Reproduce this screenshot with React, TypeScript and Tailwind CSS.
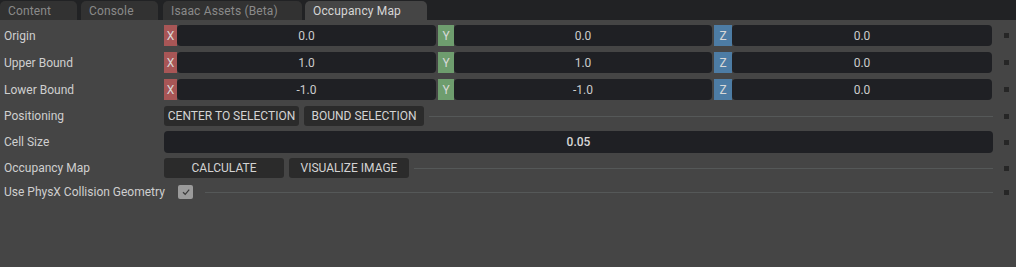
const font = { fontFamily: "Roboto, 'Liberation Sans', sans-serif" }

const tabs = [
  { label: "Content", w: "w-[77px]" },
  { label: "Console", w: "w-[77px]" },
  { label: "Isaac Assets (Beta)", w: "w-[139px]" },
  { label: "Occupancy Map", w: "w-[122px]" },
]

function Tab({ label, w, active }: { label: string; w: string; active?: boolean }) {
  return (
    <div
      className={
        `${w} h-[19px] pl-2 flex items-center rounded-t-[5px] text-[12px] tracking-[0.15px] ` +
        (active ? "bg-[#454545] text-[#d6d6d6]" : "bg-[#323232] text-[#8a8a8a]")
      }
    >
      {label}
    </div>
  )
}

function Axis({ axis, value, color, labelW }: { axis: string; value: string; color: string; labelW: string }) {
  return (
    <div className="flex h-full min-w-0">
      <div className={`${color} ${labelW} h-full flex items-center justify-center text-[12px] text-[#d8d8d8]`}>
        {axis}
      </div>
      <div className="flex-1 h-full rounded-[4px] bg-[#1f2024] flex items-center justify-center text-[12px] text-[#cccccc]">
        {value}
      </div>
    </div>
  )
}

function Row({ label, className, children }: { label: string; className: string; children: React.ReactNode }) {
  return (
    <div className={`flex items-center ${className}`}>
      <div className="w-[164px] pl-1 text-[12px] text-[#cfcfcf] whitespace-nowrap">{label}</div>
      <div className="flex-1 h-full flex items-center">{children}</div>
      <div className="ml-[11px] mr-[7px] w-[5px] h-[5px] bg-[#262626]" />
    </div>
  )
}

function Vec({ x, y, z }: { x: string; y: string; z: string }) {
  return (
    <div className="grid grid-cols-[272px_274px_278px] gap-x-[2px] w-full h-full">
      <Axis axis="X" value={x} color="bg-[#a85656]" labelW="w-[13px]" />
      <Axis axis="Y" value={y} color="bg-[#6e9d6e]" labelW="w-[16px]" />
      <Axis axis="Z" value={z} color="bg-[#4d7ca4]" labelW="w-[18px]" />
    </div>
  )
}

function Btn({ label, w }: { label: string; w: string }) {
  return (
    <div className={`${w} h-full rounded-[3px] bg-[#2b2b2b] flex items-center justify-center text-[12px] text-[#d4d4d4] whitespace-nowrap`}>
      {label}
    </div>
  )
}

function Line() {
  return <div className="flex-1 h-px bg-[#555858]" />
}

export default function App() {
  return (
    <div className="w-[1016px] h-[267px] bg-[#454545] flex flex-col" style={font}>
      <div className="h-[20px] bg-[#212224] flex items-end">
        {tabs.map((t, i) => (
          <div key={t.label} className={i === 0 ? "" : i === 2 ? "ml-[5px]" : i === 3 ? "ml-[3px]" : "ml-[4px]"}>
            <Tab label={t.label} w={t.w} active={t.label === "Occupancy Map"} />
          </div>
        ))}
      </div>

      <Row label="Origin" className="mt-[5px] h-[21px]">
        <Vec x="0.0" y="0.0" z="0.0" />
      </Row>
      <Row label="Upper Bound" className="mt-[6px] h-[21px]">
        <Vec x="1.0" y="1.0" z="0.0" />
      </Row>
      <Row label="Lower Bound" className="mt-[6px] h-[21px]">
        <Vec x="-1.0" y="-1.0" z="0.0" />
      </Row>
      <Row label="Positioning" className="mt-[6px] h-[20px]">
        <div className="flex items-center gap-[5px] w-full h-full">
          <Btn label="CENTER TO SELECTION" w="w-[135px]" />
          <Btn label="BOUND SELECTION" w="w-[120px]" />
          <Line />
        </div>
      </Row>
      <Row label="Cell Size" className="mt-[5px] h-[22px]">
        <div className="w-full h-full rounded-[4px] bg-[#1f2024] flex items-center justify-center text-[12px] text-[#d8d8d8] font-medium">
          0.05
        </div>
      </Row>
      <Row label="Occupancy Map" className="mt-[5px] h-[20px]">
        <div className="flex items-center gap-[5px] w-full h-full">
          <Btn label="CALCULATE" w="w-[120px]" />
          <Btn label="VISUALIZE IMAGE" w="w-[120px]" />
          <Line />
        </div>
      </Row>
      <Row label="Use PhysX Collision Geometry" className="mt-[7px] h-[14px]">
        <div className="flex items-center w-full h-full">
          <div className="ml-[14px] w-[15px] h-[14px] rounded-[2px] bg-[#9b9b9b] flex items-center justify-center">
            <svg width="10" height="10" viewBox="0 0 10 10" fill="none">
              <path d="M2 5.2 L4.2 7.3 L8.2 2.6" stroke="#3a3a3a" strokeWidth="1.2" />
            </svg>
          </div>
          <div className="ml-[12px] flex-1 h-px bg-[#555858]" />
        </div>
      </Row>
    </div>
  )
}
